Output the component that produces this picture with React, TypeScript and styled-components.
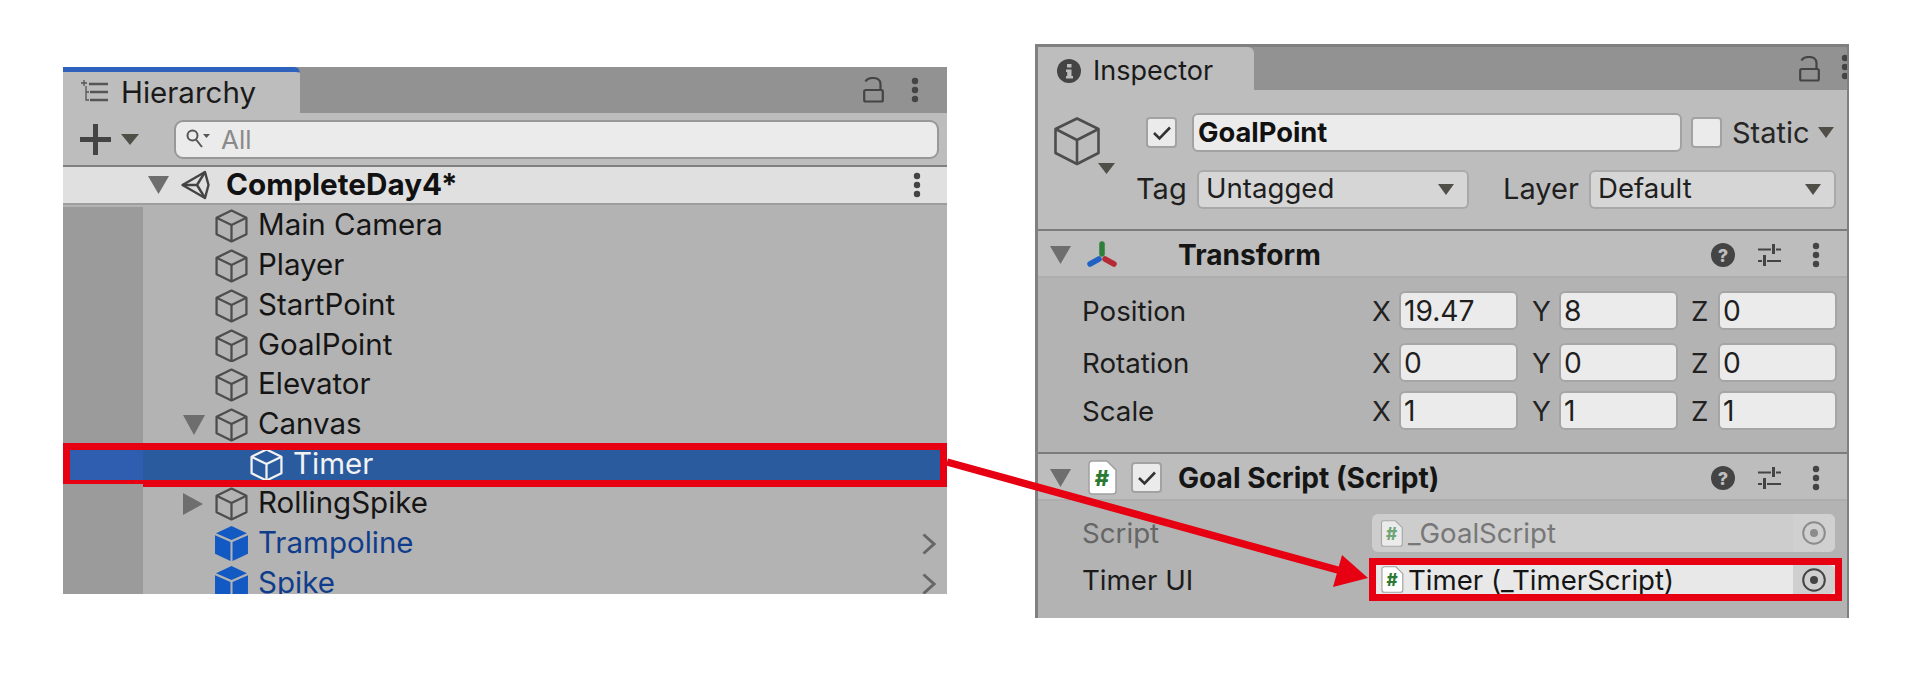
import styled, { createGlobalStyle } from 'styled-components';

const GlobalStyle = createGlobalStyle`
  * { box-sizing: border-box; }
  html, body { margin: 0; background: #fff; }
  body { font-family: Inter, "Liberation Sans", sans-serif; color: #151515; }
`;

const RED = '#e60012';

function Cube({ size = 33, color = '#4d4d4d' }: { size?: number; color?: string }) {
  return (
    <svg width={size} height={size * 1.03} viewBox="0 0 32 33" fill="none" stroke={color} strokeWidth="2.2" strokeLinejoin="round" style={{ flex: 'none' }}>
      <path d="M16 1.5 30.5 8.5V24.5L16 31.5 1.5 24.5V8.5Z" />
      <path d="M1.5 8.5 16 15.5 30.5 8.5M16 15.5V31.5" />
    </svg>
  );
}

function SolidCube() {
  return (
    <svg width="33" height="35" viewBox="0 0 32 34" style={{ flex: 'none' }}>
      <path d="M16 0 31 7 16 13.5 1 7Z" fill="#1259c3" />
      <path d="M0 9 15 15.5V34L0 27Z" fill="#1259c3" />
      <path d="M32 9 17 15.5V34L32 27Z" fill="#1259c3" />
    </svg>
  );
}

function Triangle({ w = 21, h = 18, color = '#6e6e6e', right }: { w?: number; h?: number; color?: string; right?: boolean }) {
  return (
    <svg width={w} height={h} viewBox="0 0 20 20" preserveAspectRatio="none" style={{ flex: 'none' }}>
      <path d={right ? 'M0 0 20 10 0 20Z' : 'M0 0H20L10 20Z'} fill={color} />
    </svg>
  );
}

function Dots({ color = '#444' }: { color?: string }) {
  return (
    <svg width="8" height="26" viewBox="0 0 8 26" style={{ flex: 'none' }}>
      <circle cx="4" cy="4" r="3.2" fill={color} />
      <circle cx="4" cy="13" r="3.2" fill={color} />
      <circle cx="4" cy="22" r="3.2" fill={color} />
    </svg>
  );
}

function Lock() {
  return (
    <svg width="21" height="26" viewBox="0 0 21 26" fill="none" stroke="#444" strokeWidth="2.2" style={{ flex: 'none' }}>
      <path d="M2.5 4.5C4 1.5 7 1 10 1c4 0 7.5 2 7.5 6v6" />
      <rect x="1.2" y="13" width="18.6" height="11.5" rx="1.5" />
    </svg>
  );
}

function Help() {
  return (
    <svg width="24" height="24" viewBox="0 0 24 24" style={{ flex: 'none' }}>
      <circle cx="12" cy="12" r="12" fill="#444" />
      <text x="12" y="18.5" textAnchor="middle" fontSize="18" fontWeight="800" fontFamily="Inter" fill="#bdbdbd">?</text>
    </svg>
  );
}

function Sliders() {
  return (
    <svg width="24" height="24" viewBox="0 0 24 24" stroke="#444" strokeWidth="2" fill="none" style={{ flex: 'none' }}>
      <path d="M1 6.5H14M19 6.5H24M1 18H5M10 18H24" />
      <path d="M16.5 1V11M7.5 12V23" strokeWidth="3" />
    </svg>
  );
}

function ScriptIcon({ faded, w = 30, h = 35 }: { faded?: boolean; w?: number; h?: number }) {
  return (
    <svg width={w} height={h} viewBox="0 0 30 35" style={{ flex: 'none' }}>
      <path d="M2 4a3 3 0 0 1 3-3H20L29 10V31a3 3 0 0 1-3 3H5a3 3 0 0 1-3-3Z" fill={faded ? '#ebebeb' : '#fff'} stroke={faded ? '#a8a8a8' : '#a0a0a0'} strokeWidth="1.5" />
      <text x="15" y="26" textAnchor="middle" fontSize="22" fontWeight="800" fontFamily="Inter" fill={faded ? '#6fa578' : '#2a7a34'}>#</text>
    </svg>
  );
}

function Picker({ faded }: { faded?: boolean }) {
  const c = faded ? '#8c8c8c' : '#444';
  return (
    <svg width="24" height="24" viewBox="0 0 24 24" fill="none" style={{ flex: 'none' }}>
      <circle cx="12" cy="12" r="10.8" stroke={c} strokeWidth="2" />
      <circle cx="12" cy="12" r="4" fill={c} />
    </svg>
  );
}

function Check() {
  return (
    <svg width="20" height="16" viewBox="0 0 20 16" fill="none" stroke="#333" strokeWidth="2.6">
      <path d="M2 8 7.5 13.5 18 2.5" />
    </svg>
  );
}

const Page = styled.div`
  position: relative;
  width: 1906px;
  height: 682px;
  padding: 44px 0 0 63px;
  display: flex;
  align-items: flex-start;
  overflow: hidden;
  background: #fff;
`;

const ArrowOverlay = styled.svg`
  position: absolute;
  left: 0;
  top: 0;
  z-index: 5;
  pointer-events: none;
`;

/* hierarchy */
const HierarchyPanel = styled.section`
  width: 884px;
  height: 527px;
  margin-top: 23px;
  overflow: hidden;
  background: #b3b3b3;
  display: flex;
  flex-direction: column;
`;

const TabStrip = styled.div<{ $height: number }>`
  height: ${p => p.$height}px;
  flex: none;
  background: #929292;
  display: flex;
  align-items: stretch;
  justify-content: space-between;
`;

const Tab = styled.div<{ $width: number; $accent?: boolean; $gap: number; $pad: number; $size: number }>`
  width: ${p => p.$width}px;
  background: #bdbdbd;
  border-top: ${p => (p.$accent ? '5px solid #2f62bd' : 'none')};
  border-top-right-radius: 6px;
  display: flex;
  align-items: center;
  gap: ${p => p.$gap}px;
  padding: ${p => (p.$accent ? 0 : 4)}px 0 ${p => (p.$accent ? 2 : 0)}px ${p => p.$pad}px;
  font-size: ${p => p.$size}px;
  color: #1a1a1a;
`;

const TabActions = styled.div<{ $gap: number; $pad: number }>`
  display: flex;
  align-items: center;
  gap: ${p => p.$gap}px;
  padding-right: ${p => p.$pad}px;
`;

const Toolbar = styled.div`
  height: 54px;
  flex: none;
  background: #bdbdbd;
  border-bottom: 2px solid #808080;
  display: flex;
  align-items: center;
  padding: 0 8px 0 17px;
`;

const AddButton = styled.div`
  width: 94px;
  flex: none;
  display: flex;
  align-items: center;
  gap: 10px;
  svg:first-child { flex: none; }
`;

const SearchBox = styled.div`
  flex: 1;
  height: 39px;
  background: #ebebeb;
  border: 2px solid #989898;
  border-radius: 9px;
  display: flex;
  align-items: center;
  gap: 11px;
  padding-left: 10px;
  font-size: 26px;
  color: #8a8a8a;
`;

const SceneRow = styled.div`
  height: 38px;
  flex: none;
  background: #e0e0e0;
  border-bottom: 2px solid #9e9e9e;
  display: flex;
  align-items: center;
  padding: 0 26px 0 85px;
  font-size: 29.7px;
  font-weight: 700;
  color: #111;
`;

const SceneName = styled.span`
  flex: 1;
  margin-left: 16px;
  padding-bottom: 3px;
`;

const Tree = styled.div`
  padding-top: 1.6px;
  display: flex;
  flex-direction: column;
`;

const TreeRow = styled.div<{ $selected?: boolean }>`
  position: relative;
  height: 39.7px;
  flex: none;
  display: flex;
  background: ${p => (p.$selected ? '#2b5b9f' : 'transparent')};
  color: ${p => (p.$selected ? '#f2f2f2' : '#151515')};

  ${p =>
    p.$selected &&
    `&::after {
      content: '';
      position: absolute;
      inset: -2px 0 -2.5px 0;
      border: 7px solid ${RED};
    }`}
`;

const Gutter = styled.div<{ $selected?: boolean }>`
  width: 80px;
  flex: none;
  background: ${p => (p.$selected ? '#2f5db0' : '#9b9b9b')};
`;

const RowBody = styled.div<{ $indent: number }>`
  flex: 1;
  display: flex;
  align-items: center;
  padding-left: ${p => p.$indent}px;
  padding-right: 11px;
`;

const Foldout = styled.div`
  width: 32px;
  flex: none;
  display: flex;
`;

const RowLabel = styled.span<{ $prefab?: boolean }>`
  flex: 1;
  margin-left: 10px;
  padding-bottom: 4px;
  font-size: 29.5px;
  color: ${p => (p.$prefab ? '#0f3d8c' : 'inherit')};
  white-space: nowrap;
`;

/* inspector */
const InspectorPanel = styled.section`
  width: 814px;
  height: 574px;
  margin-left: 88px;
  overflow: hidden;
  border: 2px solid #808080;
  border-top-width: 3px;
  border-left-width: 3px;
  border-bottom: none;
  background: #b3b3b3;
  display: flex;
  flex-direction: column;
`;

const ObjectHeader = styled.div`
  height: 141px;
  flex: none;
  background: #bdbdbd;
  border-bottom: 2px solid #7c7c7c;
  display: flex;
  padding: 23px 0 0 16px;
`;

const ObjectIcon = styled.div`
  width: 61px;
  flex: none;
  padding-top: 4px;
  display: flex;
  align-items: flex-start;
  margin-right: 21px;
`;

const ObjectFields = styled.div`
  display: flex;
  flex-direction: column;
  gap: 18px;
`;

const NameRow = styled.div`
  height: 39px;
  display: flex;
  align-items: center;
  padding-left: 10px;
`;

const CheckBox = styled.div`
  width: 31px;
  height: 31px;
  flex: none;
  background: #ebebeb;
  border: 2px solid #a2a2a2;
  border-radius: 4px;
  display: flex;
  align-items: center;
  justify-content: center;
`;

const NameField = styled.div`
  width: 490px;
  height: 39px;
  margin: 0 9px 0 15px;
  background: #ebebeb;
  border: 2px solid #a2a2a2;
  border-radius: 6px;
  padding-left: 4px;
  font-size: 27.3px;
  font-weight: 700;
  line-height: 36px;
  color: #111;
`;

const StaticLabel = styled.div`
  margin-left: 10px;
  display: flex;
  align-items: center;
  gap: 8px;
  font-size: 29px;
  color: #262626;
`;

const TagRow = styled.div`
  height: 39px;
  display: flex;
  align-items: center;
  font-size: 27.6px;
  color: #1f1f1f;
`;

const TagLabel = styled.span<{ $width: number }>`
  width: ${p => p.$width}px;
  flex: none;
  padding-bottom: 3px;
  font-size: 29px;
`;

const Select = styled.div<{ $width: number; $after?: number }>`
  width: ${p => p.$width}px;
  height: 39px;
  margin-right: ${p => p.$after ?? 0}px;
  background: #d6d6d6;
  border: 2px solid #a8a8a8;
  border-top-color: #ababab;
  border-radius: 6px;
  display: flex;
  align-items: center;
  justify-content: space-between;
  padding: 0 13px 0 7px;
`;

const SelectValue = styled.span`
  padding-bottom: 3px;
`;

const ComponentHeader = styled.div`
  height: 47px;
  flex: none;
  background: #bdbdbd;
  border-bottom: 2px solid #adadad;
  display: flex;
  align-items: center;
  padding: 2px 27px 0 12px;
`;

const HeaderIcon = styled.div`
  width: 30px;
  flex: none;
  margin-left: 16px;
  display: flex;
  align-items: center;
  justify-content: center;
`;

const HeaderCheck = styled.div`
  margin-left: 14px;
`;

const HeaderTitle = styled.span<{ $offset: number }>`
  flex: 1;
  margin-left: ${p => p.$offset}px;
  font-size: 28.1px;
  font-weight: 700;
  color: #151515;
`;

const HeaderActions = styled.div`
  display: flex;
  align-items: center;
  gap: 22px;
  svg:last-child { margin-left: 9px; }
`;

const TransformBody = styled.div`
  height: 176px;
  flex: none;
  border-bottom: 2px solid #7c7c7c;
  padding-top: 13px;
`;

const VectorRow = styled.div<{ $top: number }>`
  height: 39px;
  margin-top: ${p => p.$top}px;
  display: flex;
  align-items: center;
  padding-left: 44px;
  font-size: 27.7px;
  color: #222;
`;

const PropLabel = styled.span<{ $muted?: boolean }>`
  width: 290px;
  flex: none;
  font-size: 27.7px;
  color: ${p => (p.$muted ? '#666' : '#1c1c1c')};
`;

const Axis = styled.span`
  width: 27px;
  flex: none;
`;

const NumberField = styled.div<{ $after?: number }>`
  width: 119px;
  height: 39px;
  margin-right: ${p => p.$after ?? 0}px;
  background: #ebebeb;
  border: 2px solid #a5a5a5;
  border-radius: 6px;
  padding-left: 3px;
  font-size: 28.2px;
  line-height: 36px;
  color: #1f1f1f;
`;

const ScriptBody = styled.div`
  flex: 1;
  padding-top: 13px;
`;

const ObjectRow = styled.div<{ $top?: number; $height: number }>`
  height: ${p => p.$height}px;
  margin-top: ${p => p.$top ?? 0}px;
  display: flex;
  align-items: center;
  padding-left: 44px;
`;

const ObjectField = styled.div<{ $highlight?: boolean }>`
  position: relative;
  height: 100%;
  flex: none;
  width: ${p => (p.$highlight ? 459 : 463)}px;
  margin-left: ${p => (p.$highlight ? 4 : 0)}px;
  background: ${p => (p.$highlight ? '#e8e8e8' : '#cdcdcd')};
  border-radius: ${p => (p.$highlight ? 0 : 6)}px;
  display: flex;
  align-items: center;
  padding-left: ${p => (p.$highlight ? 4 : 7)}px;
  font-size: 27.6px;
  color: ${p => (p.$highlight ? '#151515' : '#777')};

  ${p =>
    p.$highlight &&
    `&::after {
      content: '';
      position: absolute;
      inset: -7px;
      border: 7px solid ${RED};
    }`}
`;

const ObjectName = styled.span`
  flex: 1;
  margin-left: 4px;
  white-space: nowrap;
`;

const PickerSlot = styled.div<{ $highlight?: boolean }>`
  width: 42px;
  height: 100%;
  flex: none;
  background: ${p => (p.$highlight ? '#cfcfcf' : '#d0d0d0')};
  border-radius: 0 6px 6px 0;
  display: flex;
  align-items: center;
  justify-content: center;
`;

const rows = [
  { name: 'Main Camera' },
  { name: 'Player' },
  { name: 'StartPoint' },
  { name: 'GoalPoint' },
  { name: 'Elevator' },
  { name: 'Canvas', fold: 'down' },
  { name: 'Timer', selected: true, depth: 1 },
  { name: 'RollingSpike', fold: 'right' },
  { name: 'Trampoline', prefab: true },
  { name: 'Spike', prefab: true },
];

const vectors = [
  { label: 'Position', values: ['19.47', '8', '0'], top: 0 },
  { label: 'Rotation', values: ['0', '0', '0'], top: 13 },
  { label: 'Scale', values: ['1', '1', '1'], top: 9 },
];

export default function App() {
  return (
    <>
      <GlobalStyle />
      <Page>
        <HierarchyPanel>
          <TabStrip $height={46}>
            <Tab $width={237} $accent $gap={13} $pad={18} $size={29.5}>
              <svg width="27" height="23" viewBox="0 0 27 23" stroke="#555" fill="none" strokeWidth="2.4" style={{ flex: 'none' }}>
                <path d="M8 4H27M9 12H27M9 20H27" />
                <path d="M3 0V6M0 3H6M5 6V20H8M5 12H8" strokeWidth="1.3" />
              </svg>
              Hierarchy
            </Tab>
            <TabActions $gap={27} $pad={28}>
              <Lock />
              <Dots />
            </TabActions>
          </TabStrip>
          <Toolbar>
            <AddButton>
              <svg width="31" height="31" viewBox="0 0 31 31" fill="#444">
                <path d="M13 0h5v13h13v5H18v13h-5V18H0v-5h13Z" />
              </svg>
              <Triangle w={18} h={11} color="#4f4f47" />
            </AddButton>
            <SearchBox>
              <svg width="24" height="20" viewBox="0 0 24 20" fill="none" stroke="#555" strokeWidth="2">
                <circle cx="6.5" cy="6.5" r="5" />
                <path d="M10 10.5 16 18" />
                <path d="M17 5H24L20.5 9Z" fill="#555" stroke="none" />
              </svg>
              All
            </SearchBox>
          </Toolbar>
          <SceneRow>
            <Triangle />
            <svg width="29" height="30" viewBox="0 0 29 30" fill="none" stroke="#444" strokeWidth="2.4" strokeLinejoin="round" style={{ marginLeft: 12, flex: 'none' }}>
              <path d="M1.5 15 24 2 27.5 15 24 28Z" />
              <path d="M1.5 15H16L24 2M16 15 24 28" />
            </svg>
            <SceneName>CompleteDay4*</SceneName>
            <Dots />
          </SceneRow>
          <Tree>
            {rows.map(row => (
              <TreeRow key={row.name} $selected={row.selected}>
                <Gutter $selected={row.selected} />
                <RowBody $indent={row.depth ? 107 : 40}>
                  {!row.depth && (
                    <Foldout>
                      {row.fold === 'down' && <Triangle w={22} h={20} />}
                      {row.fold === 'right' && <Triangle w={20} h={22} right />}
                    </Foldout>
                  )}
                  {row.prefab ? <SolidCube /> : <Cube color={row.selected ? '#f2f2f2' : '#4d4d4d'} />}
                  <RowLabel $prefab={row.prefab}>{row.name}</RowLabel>
                  {row.prefab && (
                    <svg width="14" height="22" viewBox="0 0 14 22" fill="none" stroke="#666" strokeWidth="3">
                      <path d="M1.5 1.5 12 11 1.5 20.5" />
                    </svg>
                  )}
                </RowBody>
              </TreeRow>
            ))}
          </Tree>
        </HierarchyPanel>

        <InspectorPanel>
          <TabStrip $height={43}>
            <Tab $width={216} $gap={12} $pad={19} $size={27}>
              <svg width="24" height="24" viewBox="0 0 24 24" style={{ flex: 'none' }}>
                <circle cx="12" cy="12" r="12" fill="#444" />
                <path d="M10 5h4.5v3.5H10ZM9 10.5h5.5V17H16v2.5H9V17h1.2v-4H9Z" fill="#bdbdbd" />
              </svg>
              Inspector
            </Tab>
            <TabActions $gap={21} $pad={0}>
              <Lock />
              <div style={{ width: 6, overflow: 'hidden' }}>
                <Dots color="#444" />
              </div>
            </TabActions>
          </TabStrip>

          <ObjectHeader>
            <ObjectIcon>
              <svg width="61" height="57" viewBox="0 0 61 57" fill="none" stroke="#4d4d4d" strokeWidth="2.6" strokeLinejoin="round">
                <path d="M23 1.5 44.5 12V36L23 47 1.5 36V12Z" />
                <path d="M1.5 12 23 23 44.5 12M23 23V47" />
                <path d="M44 46H61L52.5 57Z" fill="#4f4f47" stroke="none" />
              </svg>
            </ObjectIcon>
            <ObjectFields>
              <NameRow>
                <CheckBox>
                  <Check />
                </CheckBox>
                <NameField>GoalPoint</NameField>
                <CheckBox />
                <StaticLabel>
                  Static
                  <Triangle w={16} h={11} color="#4f4f47" />
                </StaticLabel>
              </NameRow>
              <TagRow>
                <TagLabel $width={61}>Tag</TagLabel>
                <Select $width={272} $after={34}>
                  <SelectValue>Untagged</SelectValue>
                  <Triangle w={16} h={11} color="#4f4f47" />
                </Select>
                <TagLabel $width={86}>Layer</TagLabel>
                <Select $width={247}>
                  <SelectValue>Default</SelectValue>
                  <Triangle w={16} h={11} color="#4f4f47" />
                </Select>
              </TagRow>
            </ObjectFields>
          </ObjectHeader>

          <ComponentHeader>
            <Triangle />
            <HeaderIcon>
              <svg width="30" height="28" viewBox="0 0 30 28" fill="none" strokeWidth="5.5" strokeLinecap="round">
                <path d="M15 3V13" stroke="#2f7f3c" />
                <path d="M12 18 3 23" stroke="#1f62c4" />
                <path d="M18 18 27 23" stroke="#b52a35" />
              </svg>
            </HeaderIcon>
            <HeaderTitle $offset={61}>Transform</HeaderTitle>
            <HeaderActions>
              <Help />
              <Sliders />
              <Dots />
            </HeaderActions>
          </ComponentHeader>

          <TransformBody>
            {vectors.map(v => (
              <VectorRow key={v.label} $top={v.top}>
                <PropLabel>{v.label}</PropLabel>
                <Axis>X</Axis>
                <NumberField $after={14}>{v.values[0]}</NumberField>
                <Axis>Y</Axis>
                <NumberField $after={13}>{v.values[1]}</NumberField>
                <Axis>Z</Axis>
                <NumberField>{v.values[2]}</NumberField>
              </VectorRow>
            ))}
          </TransformBody>

          <ComponentHeader>
            <Triangle />
            <HeaderIcon>
              <ScriptIcon />
            </HeaderIcon>
            <HeaderCheck>
              <CheckBox>
                <Check />
              </CheckBox>
            </HeaderCheck>
            <HeaderTitle $offset={16}>Goal Script (Script)</HeaderTitle>
            <HeaderActions>
              <Help />
              <Sliders />
              <Dots />
            </HeaderActions>
          </ComponentHeader>

          <ScriptBody>
            <ObjectRow $height={38}>
              <PropLabel $muted>Script</PropLabel>
              <ObjectField>
                <ScriptIcon faded w={25} h={27} />
                <ObjectName>_GoalScript</ObjectName>
                <PickerSlot>
                  <Picker faded />
                </PickerSlot>
              </ObjectField>
            </ObjectRow>
            <ObjectRow $top={13} $height={29}>
              <PropLabel>Timer UI</PropLabel>
              <ObjectField $highlight>
                <ScriptIcon w={24} h={27} />
                <ObjectName>Timer (_TimerScript)</ObjectName>
                <PickerSlot $highlight>
                  <Picker />
                </PickerSlot>
              </ObjectField>
            </ObjectRow>
          </ScriptBody>
        </InspectorPanel>

        <ArrowOverlay width="1906" height="682" viewBox="0 0 1906 682">
          <path d="M947 462 1345 572" stroke={RED} strokeWidth="7.5" fill="none" />
          <path d="M1342 555 1368 578 1333 587Z" fill={RED} />
        </ArrowOverlay>
      </Page>
    </>
  );
}
